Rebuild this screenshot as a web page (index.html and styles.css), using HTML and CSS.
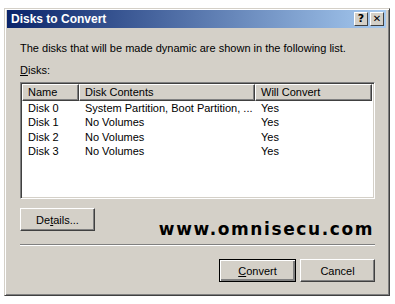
FILE: index.html
```html
<!DOCTYPE html>
<html lang="en">
<head>
  <meta charset="UTF-8" />
  <title>Disks to Convert</title>
  <link rel="stylesheet" href="styles.css">
</head>
<body>

<div class="dialog">
  <div class="titlebar">
    <span class="title">Disks to Convert</span>
    <div class="caption-buttons">
      <span class="cap-btn">?</span>
      <span class="cap-btn close">&#x2715;</span>
    </div>
  </div>

  <div class="content">
    <p class="intro">The disks that will be made dynamic are shown in the following list.</p>
    <div class="label"><u>D</u>isks:</div>

    <div class="listbox">
      <div class="list-head">
        <div class="col c-name">Name</div>
        <div class="col c-contents">Disk Contents</div>
        <div class="col c-convert">Will Convert</div>
      </div>
      <div class="row">
        <div class="cell c-name">Disk 0</div>
        <div class="cell c-contents">System Partition, Boot Partition, ...</div>
        <div class="cell c-convert">Yes</div>
      </div>
      <div class="row">
        <div class="cell c-name">Disk 1</div>
        <div class="cell c-contents">No Volumes</div>
        <div class="cell c-convert">Yes</div>
      </div>
      <div class="row">
        <div class="cell c-name">Disk 2</div>
        <div class="cell c-contents">No Volumes</div>
        <div class="cell c-convert">Yes</div>
      </div>
      <div class="row">
        <div class="cell c-name">Disk 3</div>
        <div class="cell c-contents">No Volumes</div>
        <div class="cell c-convert">Yes</div>
      </div>
    </div>

    <div class="details-row">
      <button class="btn details">De<u>t</u>ails...</button>
      <span class="watermark">www.omnisecu.com</span>
    </div>

    <div class="separator"></div>

    <div class="actions">
      <button class="btn default"><u>C</u>onvert</button>
      <button class="btn">Cancel</button>
    </div>
  </div>
</div>

</body>
</html>
```

FILE: styles.css
```css
body {
  margin: 0;
  background: #fff;
  font-family: Tahoma, "Liberation Sans", sans-serif;
  font-size: 11px;
  color: #000;
}
.dialog {
  margin: 8px 0 0 4px;
  width: 386px;
  height: 288px;
  box-sizing: border-box;
  background: #d4d0c8;
  border: 1px solid;
  border-color: #d4d0c8 #404040 #404040 #d4d0c8;
  box-shadow: inset 1px 1px #fff, inset -1px -1px #808080;
  padding: 1px 3px 0 1px;
}
.titlebar {
  height: 18px;
  margin-left: 1px;
  display: flex;
  align-items: center;
  justify-content: space-between;
  background: linear-gradient(to right, #0a246a, #a6caf0);
  padding: 0 2px 0 4px;
}
.title {
  color: #fff;
  font-family: "Liberation Sans", sans-serif;
  font-weight: bold;
  font-size: 12px;
}
.caption-buttons {
  display: flex;
  gap: 2px;
}
.cap-btn {
  width: 14px;
  height: 14px;
  box-sizing: border-box;
  background: #d4d0c8;
  border: 1px solid;
  border-color: #fff #404040 #404040 #fff;
  font-family: "DejaVu Sans", sans-serif;
  font-weight: bold;
  font-size: 11px;
  line-height: 12px;
  text-align: center;
}
.cap-btn.close {
  font-size: 10px;
}
.content {
  padding: 0 11px 0 14px;
}
.intro {
  margin: 13px 0 0;
  line-height: 14px;
  white-space: nowrap;
}
.label {
  margin-top: 8px;
  line-height: 14px;
}
.listbox {
  margin-top: 5px;
  height: 117px;
  box-sizing: border-box;
  background: #fff;
  border: 1px solid;
  border-color: #808080 #fff #fff #808080;
  box-shadow: inset 1px 1px #404040, inset -1px -1px #d4d0c8;
  padding: 1px;
}
.list-head {
  display: flex;
  height: 17px;
}
.col {
  box-sizing: border-box;
  background: #d4d0c8;
  border: 1px solid;
  border-color: #fff #404040 #404040 #fff;
  box-shadow: inset -1px -1px #808080;
  padding-left: 5px;
  line-height: 14px;
}
.c-name { width: 57px; flex: none; }
.c-contents { width: 176px; flex: none; overflow: hidden; }
.c-convert { width: 117px; flex: none; }
.row {
  display: flex;
  height: 14.4px;
  line-height: 14px;
}
.cell {
  padding-left: 6px;
  box-sizing: border-box;
  white-space: nowrap;
}
.details-row {
  display: flex;
  justify-content: space-between;
  margin-top: 9px;
}
.btn {
  font-family: inherit;
  font-size: 11px;
  color: #000;
  background: #d4d0c8;
  width: 75px;
  height: 23px;
  border: 1px solid;
  border-color: #fff #404040 #404040 #fff;
  box-shadow: inset -1px -1px #808080;
  padding: 0;
}
.btn.default {
  width: 77px;
  border: 1px solid #000;
  box-shadow: inset 1px 1px #fff, inset -2px -2px #808080;
}
.watermark {
  margin-top: 13px;
  margin-right: 1px;
  font-family: "DejaVu Sans", sans-serif;
  font-weight: bold;
  font-size: 17px;
  letter-spacing: 1.6px;
  line-height: 16px;
}
.separator {
  margin-top: 7px;
  height: 1px;
  border-top: 1px solid #808080;
  background: #fff;
}
.actions {
  display: flex;
  justify-content: flex-end;
  gap: 4px;
  margin-top: 13px;
}
```
